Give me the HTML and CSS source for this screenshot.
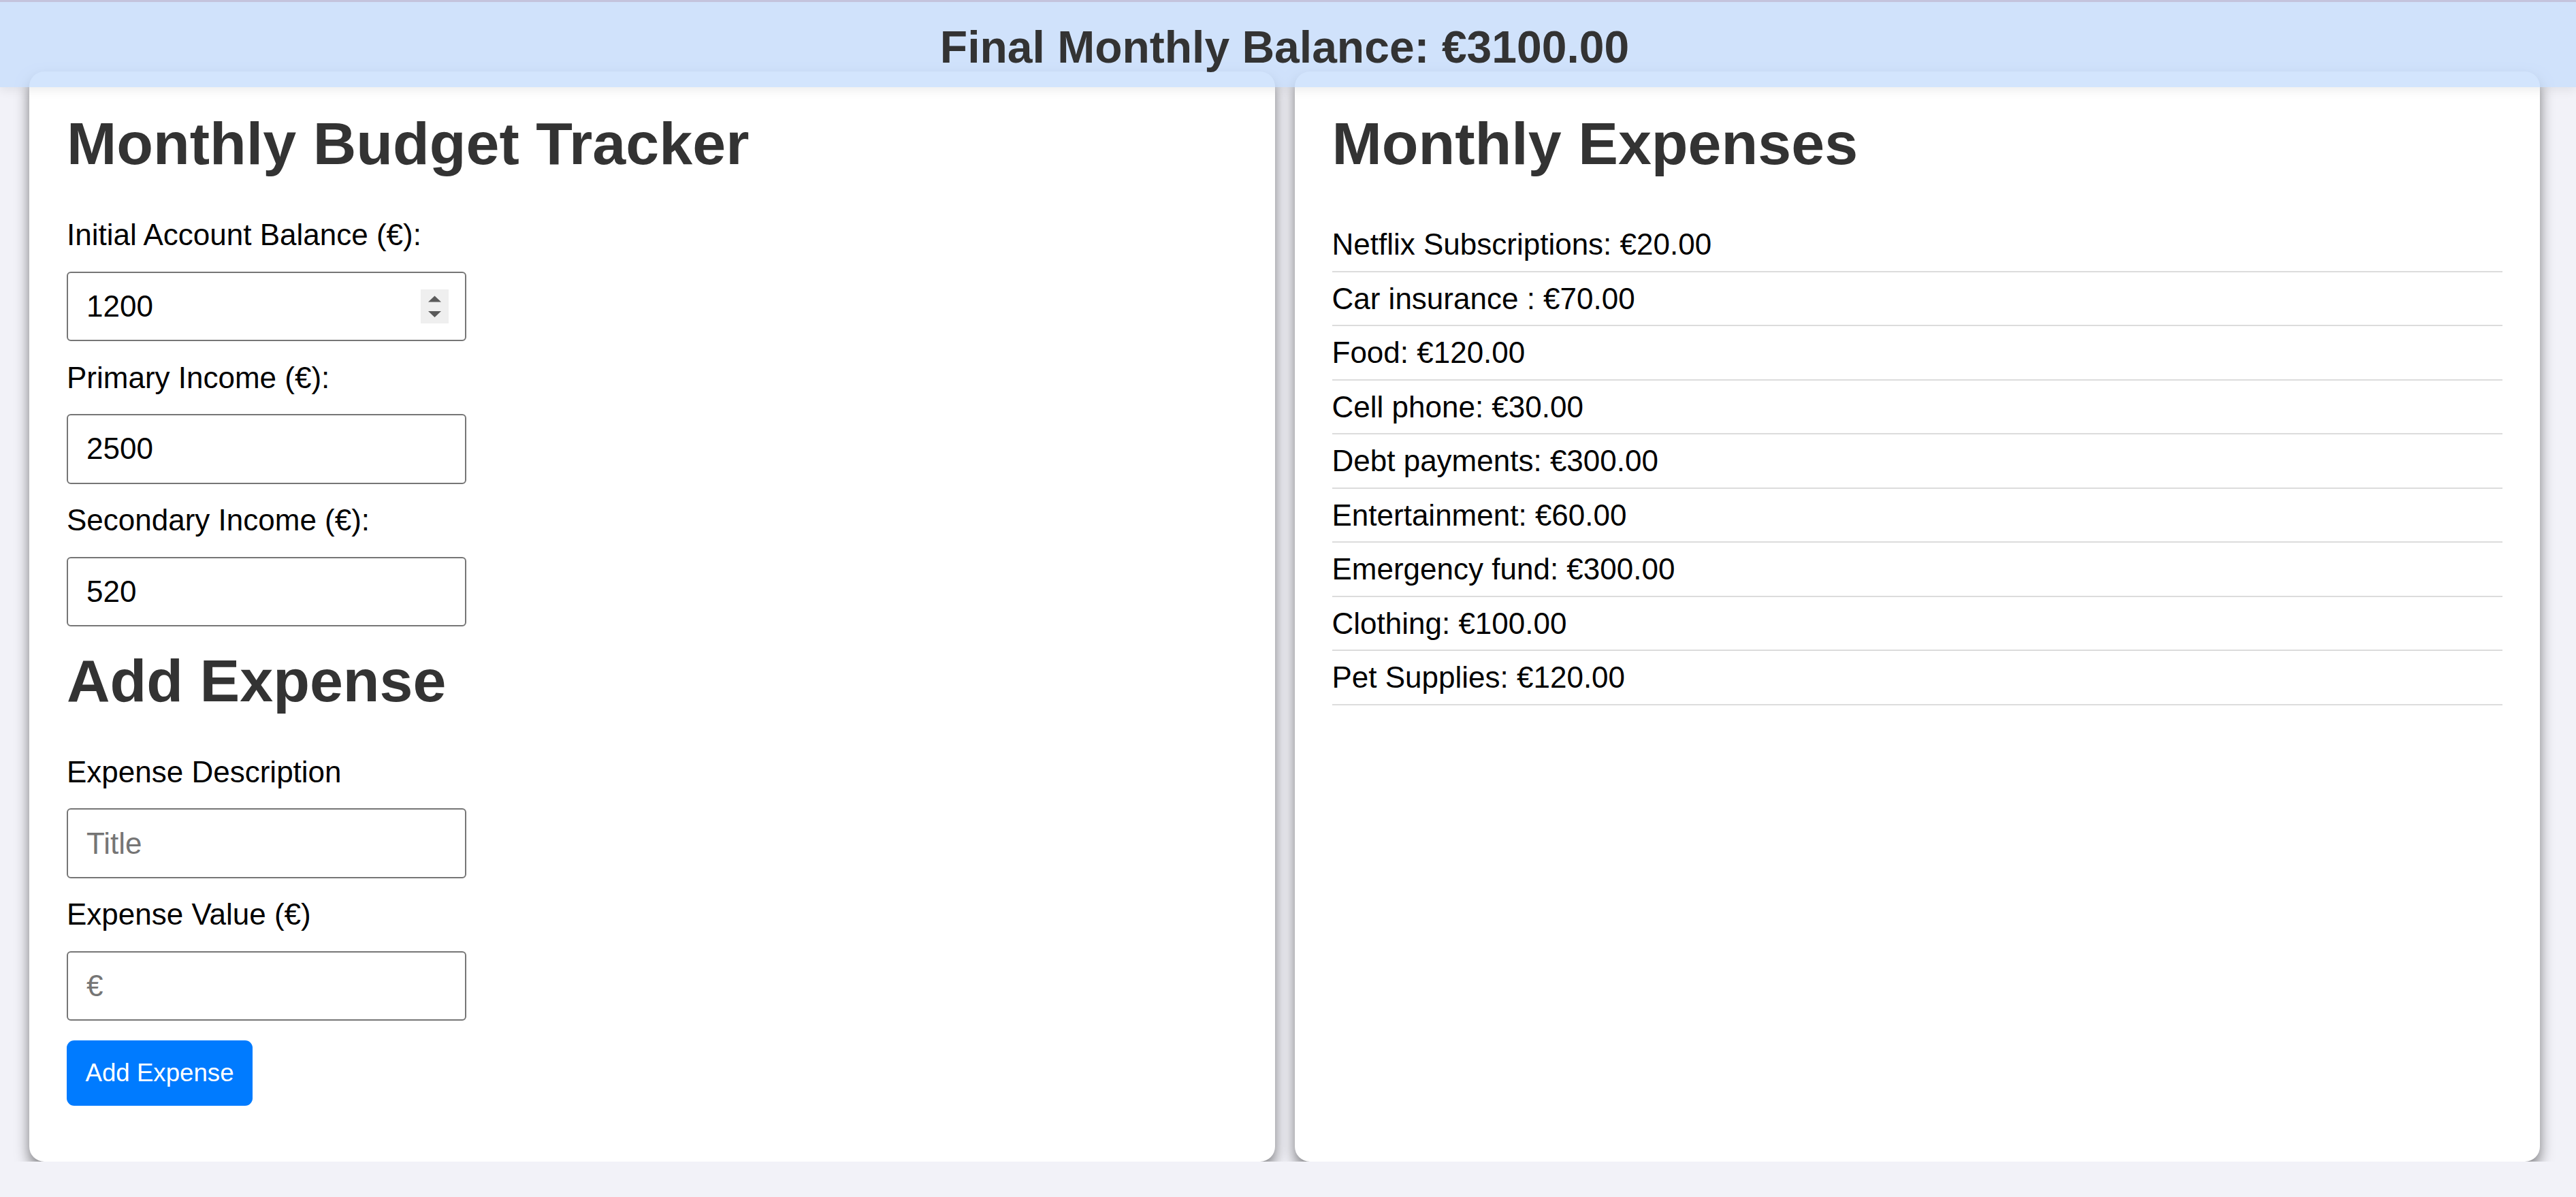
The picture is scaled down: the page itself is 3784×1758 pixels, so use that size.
FILE: index.html
```html
<!DOCTYPE html>
<html lang="en">
<head>
<meta charset="utf-8">
<title>Monthly Budget Tracker</title>
<link rel="stylesheet" href="styles.css">
</head>
<body>
<header class="balance-bar">Final Monthly Balance: €3100.00</header>
<main class="layout">
  <section class="card">
    <h1 class="card-title">Monthly Budget Tracker</h1>
    <label class="field-label" for="initial">Initial Account Balance (€):</label>
    <div class="field">
      <input class="field-input" id="initial" type="number" value="1200">
      <span class="spinner"><svg viewBox="0 0 41 50" width="41" height="50"><polygon points="11,18.5 30,18.5 20.5,9.5" fill="#5a5a5a"/><polygon points="11,32 30,32 20.5,41" fill="#5a5a5a"/></svg></span>
    </div>
    <label class="field-label" for="primary">Primary Income (€):</label>
    <div class="field">
      <input class="field-input" id="primary" type="number" value="2500">
    </div>
    <label class="field-label" for="secondary">Secondary Income (€):</label>
    <div class="field">
      <input class="field-input" id="secondary" type="number" value="520">
    </div>
    <h2 class="card-title">Add Expense</h2>
    <label class="field-label" for="desc">Expense Description</label>
    <div class="field">
      <input class="field-input" id="desc" type="text" placeholder="Title">
    </div>
    <label class="field-label" for="value">Expense Value (€)</label>
    <div class="field">
      <input class="field-input" id="value" type="number" placeholder="€">
    </div>
    <button class="add-btn" type="button">Add Expense</button>
  </section>
  <section class="card">
    <h1 class="card-title">Monthly Expenses</h1>
    <ul class="expense-list">
      <li>Netflix Subscriptions: €20.00</li>
      <li>Car insurance : €70.00</li>
      <li>Food: €120.00</li>
      <li>Cell phone: €30.00</li>
      <li>Debt payments: €300.00</li>
      <li>Entertainment: €60.00</li>
      <li>Emergency fund: €300.00</li>
      <li>Clothing: €100.00</li>
      <li>Pet Supplies: €120.00</li>
    </ul>
  </section>
</main>
</body>
</html>
```
FILE: styles.css
```css
html, body {
  margin: 0;
  padding: 0;
}
body {
  background: #f2f2f8;
  font-family: "Liberation Sans", Arial, sans-serif;
  color: #000;
}
.balance-bar {
  position: fixed;
  top: 0;
  left: 0;
  right: 0;
  z-index: 10;
  box-sizing: border-box;
  height: 128px;
  border-top: 3px solid #c4c3dc;
  padding: 28px 10px 0 0;
  text-align: center;
  font-size: 66px;
  font-weight: bold;
  line-height: 76px;
  color: #333;
  background: rgba(194, 219, 252, 0.72);
  box-shadow: 0 5px 14px rgba(0, 0, 0, 0.07);
}
.layout {
  display: flex;
  gap: 29px;
  padding: 105px 53px 0 43px;
}
.card {
  flex: 1 1 0;
  background: #fff;
  border-radius: 22px;
  padding: 55px;
  box-shadow: 0 10px 20px rgba(0, 0, 0, 0.5);
}
.card-title {
  margin: 0 0 59px;
  font-size: 88px;
  font-weight: bold;
  line-height: 101px;
  color: #333;
}
.field-label {
  display: block;
  font-size: 44px;
  line-height: 50.6px;
  margin-bottom: 28px;
  color: #000;
}
.field {
  position: relative;
  width: 587px;
  margin-bottom: 28.5px;
}
.field-input {
  display: block;
  box-sizing: border-box;
  width: 100%;
  height: 102.5px;
  margin: 0;
  padding: 0 27px;
  border: 2px solid #767676;
  border-radius: 6px;
  font-family: "Liberation Sans", Arial, sans-serif;
  font-size: 44px;
  color: #000;
  background: #fff;
  outline: none;
  -moz-appearance: textfield;
}
.field-input::-webkit-inner-spin-button,
.field-input::-webkit-outer-spin-button {
  -webkit-appearance: none;
  margin: 0;
}
.field-input::placeholder {
  color: #757575;
}
.spinner {
  position: absolute;
  top: 26px;
  right: 26px;
  width: 41px;
  height: 50px;
  background: #efefef;
}
.spinner svg {
  display: block;
}
.add-btn {
  display: block;
  height: 96px;
  margin: 0 0 27.5px;
  padding: 0 27.5px;
  border: none;
  border-radius: 11px;
  background: #007bff;
  color: #fff;
  font-family: "Liberation Sans", Arial, sans-serif;
  font-size: 36.67px;
}
.expense-list {
  list-style: none;
  margin: 0;
  padding: 0;
}
.expense-list li {
  padding: 13px 0;
  font-size: 44px;
  line-height: 51.5px;
  border-bottom: 2px solid #dcdcdc;
}
```
